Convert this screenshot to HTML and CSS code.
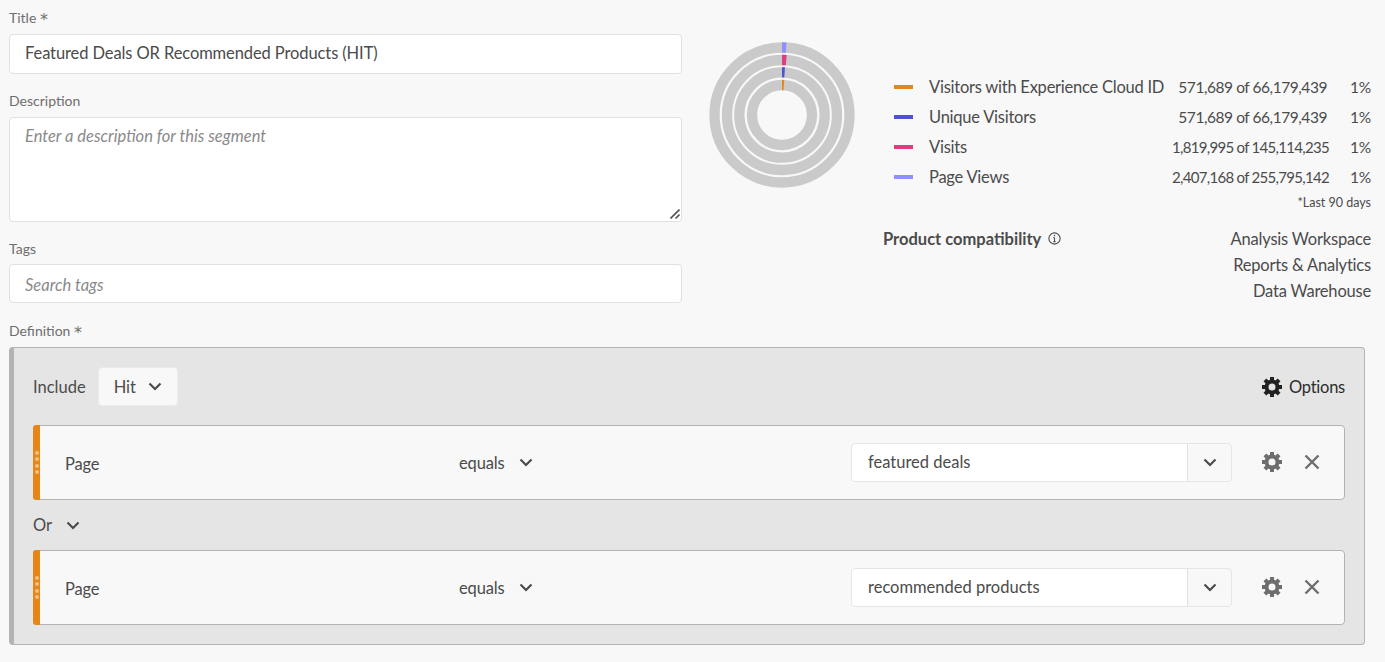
FILE: index.html
```html
<!DOCTYPE html>
<html>
<head>
  <meta charset="utf-8">
  <title>Segment</title>
  <link rel="stylesheet" href="styles.css">
</head>
<body>
<svg class="defs" width="0" height="0">
  <symbol id="gear" viewBox="0 0 20 20">
    <circle cx="10" cy="10" r="5.5" fill="none" stroke="currentColor" stroke-width="4"/>
    <g fill="currentColor">
      <rect x="8" y="0" width="4" height="4"/>
      <rect x="8" y="16" width="4" height="4"/>
      <rect x="0" y="8" width="4" height="4"/>
      <rect x="16" y="8" width="4" height="4"/>
      <rect x="8" y="0" width="4" height="4" transform="rotate(45 10 10)"/>
      <rect x="8" y="16" width="4" height="4" transform="rotate(45 10 10)"/>
      <rect x="0" y="8" width="4" height="4" transform="rotate(45 10 10)"/>
      <rect x="16" y="8" width="4" height="4" transform="rotate(45 10 10)"/>
    </g>
  </symbol>
  <symbol id="chevron" viewBox="0 0 14 9">
    <path d="M1.5 1.5 L7 7 L12.5 1.5" fill="none" stroke="currentColor" stroke-width="2.2"/>
  </symbol>
  <symbol id="close" viewBox="0 0 16 16">
    <path d="M1.5 1.5 L14.5 14.5 M14.5 1.5 L1.5 14.5" fill="none" stroke="currentColor" stroke-width="2.4"/>
  </symbol>
</svg>

<div class="top">
  <div class="fields">
    <label class="label label-first">Title <span class="star">*</span></label>
    <div class="input input-value">Featured Deals OR Recommended Products (HIT)</div>
    <label class="label">Description</label>
    <div class="input textarea placeholder">Enter a description for this segment
      <svg class="grip" width="10" height="10" viewBox="0 0 10 10"><path d="M0.5 9.5 L9.5 0.5 M5.5 9.5 L9.5 5.5" stroke="#555" stroke-width="1.6"/></svg>
    </div>
    <label class="label label-tags">Tags</label>
    <div class="input tags placeholder">Search tags</div>
  </div>

  <div class="summary">
    <svg class="donut" width="146" height="146" viewBox="0 0 146 146">
      <g fill="none" stroke="#cacaca" stroke-width="10.3">
        <circle cx="73" cy="73" r="67.5"/>
        <circle cx="73" cy="73" r="55"/>
        <circle cx="73" cy="73" r="42.7"/>
        <circle cx="73" cy="73" r="30"/>
      </g>
      <g fill="none" stroke-width="10.3" transform="rotate(-90 73 73)">
        <circle cx="73" cy="73" r="67.5" stroke="#9090fa" pathLength="100" stroke-dasharray="1 99"/>
        <circle cx="73" cy="73" r="55" stroke="#de3d82" pathLength="100" stroke-dasharray="1.25 98.75"/>
        <circle cx="73" cy="73" r="42.7" stroke="#5151d3" pathLength="100" stroke-dasharray="1 99"/>
        <circle cx="73" cy="73" r="30" stroke="#e68619" pathLength="100" stroke-dasharray="1 99"/>
      </g>
    </svg>

    <div class="stats">
      <div class="legend">
        <span class="swatch orange"></span><span>Visitors with Experience Cloud ID</span><span class="num">571,689 of 66,179,439</span><span class="pct">1%</span>
        <span class="swatch blue"></span><span>Unique Visitors</span><span class="num">571,689 of 66,179,439</span><span class="pct">1%</span>
        <span class="swatch pink"></span><span>Visits</span><span class="num num-long">1,819,995 of 145,114,235</span><span class="pct">1%</span>
        <span class="swatch lav"></span><span>Page Views</span><span class="num num-long">2,407,168 of 255,795,142</span><span class="pct">1%</span>
      </div>
      <div class="note">*Last 90 days</div>
      <div class="compat">
        <div class="compat-title">Product compatibility
          <svg class="info" width="13" height="13" viewBox="0 0 12 12"><circle cx="6" cy="6" r="5.2" fill="none" stroke="#4b4b4b"/><path d="M6 5.2 V9 M4.8 9 H7.2 M4.9 5.2 H6" fill="none" stroke="#4b4b4b"/><rect x="5.4" y="2.6" width="1.2" height="1.3" fill="#4b4b4b"/></svg>
        </div>
        <div class="compat-list">
          <div>Analysis Workspace</div>
          <div>Reports &amp; Analytics</div>
          <div>Data Warehouse</div>
        </div>
      </div>
    </div>
  </div>
</div>

<label class="label label-def">Definition <span class="star">*</span></label>
<div class="container">
  <div class="container-head">
    <span>Include</span>
    <div class="scope">Hit <svg class="chev" width="14" height="9"><use href="#chevron"/></svg></div>
    <div class="options"><svg width="20" height="20"><use href="#gear"/></svg> Options</div>
  </div>

  <div class="rule">
    <div class="handle"><i></i><i></i><i></i><i></i></div>
    <div class="dimension">Page</div>
    <div class="operator">equals <svg class="chev" width="14" height="9"><use href="#chevron"/></svg></div>
    <div class="combo">
      <div class="combo-text">featured deals</div>
      <div class="combo-btn"><svg class="chev" width="14" height="9"><use href="#chevron"/></svg></div>
    </div>
    <svg class="rule-gear" width="20" height="20"><use href="#gear"/></svg>
    <svg class="rule-x" width="16" height="16"><use href="#close"/></svg>
  </div>

  <div class="or">Or <svg class="chev" width="14" height="9"><use href="#chevron"/></svg></div>

  <div class="rule">
    <div class="handle"><i></i><i></i><i></i><i></i></div>
    <div class="dimension">Page</div>
    <div class="operator">equals <svg class="chev" width="14" height="9"><use href="#chevron"/></svg></div>
    <div class="combo">
      <div class="combo-text">recommended products</div>
      <div class="combo-btn"><svg class="chev" width="14" height="9"><use href="#chevron"/></svg></div>
    </div>
    <svg class="rule-gear" width="20" height="20"><use href="#gear"/></svg>
    <svg class="rule-x" width="16" height="16"><use href="#close"/></svg>
  </div>
</div>
</body>
</html>
```

FILE: styles.css
```css
html, body {
  margin: 0;
  height: 100%;
  overflow: hidden;
}

body {
  background-color: #f8f8f8;
  color: #4b4b4b;
  font-family: Lato, Arial, sans-serif;
  font-size: 16.5px;
  padding: 0 20px 0 9px;
  box-sizing: border-box;
}

.defs {
  display: block;
  height: 0;
}

.top {
  display: flex;
  height: 322px;
}

.fields {
  width: 673px;
  flex: none;
}

.label {
  display: block;
  color: #6e6e6e;
  font-size: 14px;
  line-height: 17px;
  margin: 18px 0 8px;
}

.label-first {
  margin-top: 9px;
}

.label-tags {
  margin-bottom: 7px;
}

.label-def {
  margin: 0 0 8px;
}

.star {
  font-family: "DejaVu Sans", sans-serif;
  font-size: 16px;
  line-height: 10px;
  position: relative;
  top: 2px;
}

.input {
  height: 40px;
  box-sizing: border-box;
  background: #fff;
  border: 1px solid #e1e1e1;
  border-radius: 4px;
  padding: 0 15px;
  line-height: 37px;
  position: relative;
}

.input-value {
  color: #4b4b4b;
  letter-spacing: -0.1px;
}

.placeholder {
  font-style: italic;
  color: #8a8a8a;
}

.textarea {
  height: 105px;
}

.tags {
  height: 39px;
  line-height: 40px;
}

.grip {
  position: absolute;
  right: 1px;
  bottom: 2px;
}

.summary {
  position: relative;
  flex: 1;
  padding-left: 27px;
  display: flex;
}

.donut {
  margin-top: 42px;
  flex: none;
}

.stats {
  margin-left: 28px;
  flex: 1;
  letter-spacing: -0.24px;
}

.legend {
  margin-top: 72px;
  display: grid;
  grid-template-columns: 35px 250px 148px 44px;
  grid-auto-rows: 30px;
  align-items: center;
  padding-left: 11px;
  width: 488px;
  box-sizing: border-box;
  white-space: nowrap;
}

.swatch {
  width: 19px;
  height: 4px;
}

.orange { background: #e68619; }
.blue { background: #5151d3; }
.pink { background: #de3d82; }
.lav { background: #9090fa; }

.num, .pct {
  text-align: right;
}

.num {
  font-size: 15.5px;
  letter-spacing: -0.45px;
  justify-self: end;
}

.pct {
  font-size: 15.5px;
}

.num-long {
  margin-right: -2px;
  font-size: 15px;
  letter-spacing: -0.7px;
}

.note {
  width: 488px;
  text-align: right;
  font-size: 12.5px;
  line-height: 20px;
  margin-top: 1px;
  letter-spacing: 0;
}

.compat {
  display: flex;
  justify-content: space-between;
  width: 488px;
  margin-top: 13px;
  line-height: 26px;
}

.compat-title {
  font-weight: 700;
  letter-spacing: 0;
}

.info {
  margin-left: 3px;
}

.compat-list {
  text-align: right;
  letter-spacing: -0.2px;
}

.container {
  height: 298px;
  box-sizing: border-box;
  background: #e5e5e5;
  border: 1px solid #b3b3b3;
  border-left: 5px solid #b3b3b3;
  border-radius: 4px;
  padding: 19px 19px 0 19px;
}

.container-head {
  display: flex;
  align-items: center;
  height: 39px;
  margin-bottom: 19px;
}

.scope {
  margin-left: 12px;
  width: 80px;
  height: 39px;
  box-sizing: border-box;
  background: #f8f8f8;
  border: 1px solid #ebebeb;
  border-radius: 4px;
  display: flex;
  align-items: center;
  padding-left: 15px;
}

.scope .chev {
  margin-left: 12px;
}

.chev {
  color: #4b4b4b;
}

.options {
  margin-left: auto;
  display: flex;
  align-items: center;
  gap: 7px;
  color: #2c2c2c;
  letter-spacing: -0.25px;
}

.options svg {
  color: #222;
}

.rule {
  position: relative;
  height: 75px;
  box-sizing: border-box;
  background: #f8f8f8;
  border: 1px solid #b3b3b3;
  border-radius: 4px;
  display: grid;
  grid-template-columns: 394px 392px 381px 30px 30px;
  align-items: center;
  padding-left: 31px;
}

.dimension {
  line-height: 21px;
  padding-top: 4px;
  letter-spacing: -0.2px;
}

.handle {
  position: absolute;
  left: -1px;
  top: -1px;
  bottom: -1px;
  width: 7px;
  background: #e68619;
  border-radius: 3px 0 0 3px;
  display: flex;
  flex-direction: column;
  justify-content: center;
  align-items: center;
  gap: 2.5px;
}

.handle i {
  width: 4px;
  height: 4px;
  border-radius: 50%;
  background: #f4be84;
}

.operator {
  display: flex;
  align-items: center;
  gap: 14px;
  letter-spacing: -0.15px;
}

.combo {
  display: flex;
  height: 39px;
  margin-top: -1px;
  box-sizing: border-box;
  border: 1px solid #e6e6e6;
  border-radius: 4px;
}

.combo-text {
  flex: 1;
  background: #fff;
  padding-left: 16px;
  line-height: 37px;
  border-right: 1px solid #e1e1e1;
  border-radius: 4px 0 0 4px;
}

.combo-btn {
  width: 43px;
  display: flex;
  align-items: center;
  justify-content: center;
}

.rule-gear {
  color: #6e6e6e;
  margin-left: 30px;
  margin-top: -2px;
}

.rule-x {
  color: #6e6e6e;
  margin-left: 42px;
  margin-top: -2px;
}

.or {
  height: 50px;
  display: flex;
  align-items: center;
  gap: 14px;
}
```
